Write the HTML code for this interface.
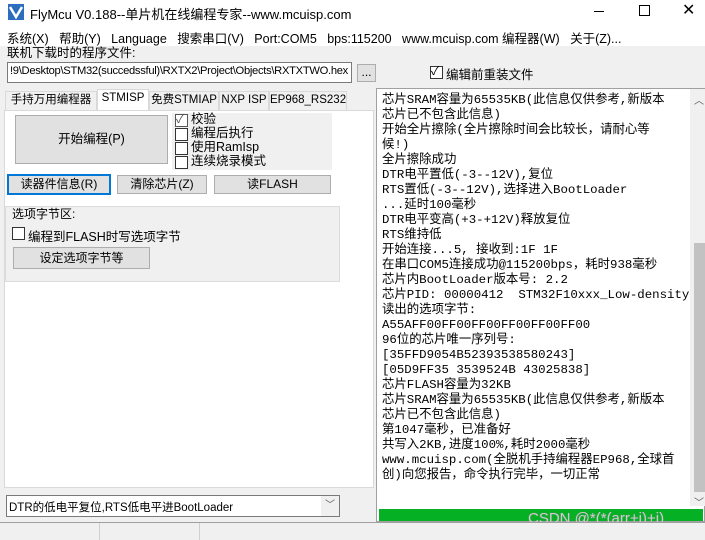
<!DOCTYPE html>
<html><head><meta charset="utf-8"><style>
*{box-sizing:border-box;margin:0;padding:0}
body{width:705px;height:540px;overflow:hidden;background:#f0f0f0;font-family:"Liberation Sans","Noto Sans CJK SC",sans-serif;font-size:12px;color:#000;position:relative}
.a{position:absolute;white-space:nowrap}
.btn{position:absolute;background:#e1e1e1;border:1px solid #adadad;text-align:center}
.cb{position:absolute;width:13px;height:13px;border:1px solid #333;background:#fff}
.log{font-family:"Liberation Mono","Noto Sans CJK SC",monospace;font-size:12.4px;line-height:15px}
.tab{position:absolute;height:20px;border:1px solid #d9d9d9;background:#f0f0f0;font-size:11.5px;line-height:17px;text-align:center;overflow:hidden}
</style></head><body>
<div class="a" style="left:0;top:0;width:705px;height:46px;background:#fff"></div>
<svg class="a" style="left:8px;top:4px" width="16" height="16"><rect width="16" height="16" fill="#2a6ebd"/><path d="M2 3 L8 13 L14 3" stroke="#fff" stroke-width="2.5" fill="none"/></svg>
<div class="a" style="left:30px;top:4px;font-size:13px">FlyMcu V0.188--单片机在线编程专家--www.mcuisp.com</div>
<div class="a" style="left:594px;top:11px;width:10px;height:1px;background:#000"></div>
<div class="a" style="left:639px;top:5px;width:11px;height:11px;border:1px solid #000"></div>
<div class="a" style="left:682px;top:0px;font-size:16px">✕</div>
<div class="a" style="left:7px;top:28px;font-size:12.5px">系统(X)&nbsp;&nbsp;&nbsp;帮助(Y)&nbsp;&nbsp;&nbsp;Language&nbsp;&nbsp;&nbsp;搜索串口(V)&nbsp;&nbsp;&nbsp;Port:COM5&nbsp;&nbsp;&nbsp;bps:115200&nbsp;&nbsp;&nbsp;www.mcuisp.com 编程器(W)&nbsp;&nbsp;&nbsp;关于(Z)...</div>
<div class="a" style="left:7px;top:45px;font-size:12.5px;line-height:16px">联机下载时的程序文件:</div>
<div class="a" style="left:7px;top:62px;width:345px;height:21px;background:#fff;border:1px solid #7a7a7a;overflow:hidden;padding:2px 0 0 2px;font-size:11.2px;letter-spacing:-0.3px">!9\Desktop\STM32(succedssful)\RXTX2\Project\Objects\RXTXTWO.hex</div>
<div class="btn" style="left:357px;top:64px;width:19px;height:18px;line-height:14px">...</div>
<div class="cb" style="left:430px;top:66px"></div><div class="a" style="left:431px;top:62px;font-size:12px">✓</div>
<div class="a" style="left:446px;top:64px;font-size:12.5px">编辑前重装文件</div>
<div class="tab" style="left:5px;top:91px;width:92px">手持万用编程器</div>
<div class="tab" style="left:97px;top:89px;width:52px;height:22px;background:#fff;border-bottom:none">STMISP</div>
<div class="tab" style="left:149px;top:91px;width:70px">免费STMIAP</div>
<div class="tab" style="left:219px;top:91px;width:50px">NXP ISP</div>
<div class="tab" style="left:269px;top:91px;width:78px">EP968_RS232</div>
<div class="a" style="left:4px;top:110px;width:370px;height:378px;background:#fff;border:1px solid #d9d9d9"></div>
<div class="btn" style="left:15px;top:115px;width:153px;height:49px;line-height:47px;font-size:12.5px">开始编程(P)</div>
<div class="a" style="left:172px;top:113px;width:160px;height:57px;background:#f0f0f0"></div>
<div class="cb" style="left:175px;top:114px;border-color:#555"></div><div class="a" style="left:176px;top:110px;color:#555">✓</div>
<div class="a" style="left:191px;top:112px;font-size:12.5px;line-height:14px">校验<br>编程后执行<br>使用RamIsp<br>连续烧录模式</div>
<div class="cb" style="left:175px;top:128px"></div><div class="cb" style="left:175px;top:142px"></div><div class="cb" style="left:175px;top:156px"></div>
<div class="btn" style="left:7px;top:174px;width:104px;height:21px;border:2px solid #0078d7;line-height:17px">读器件信息(R)</div>
<div class="btn" style="left:117px;top:175px;width:90px;height:19px;line-height:17px">清除芯片(Z)</div>
<div class="btn" style="left:214px;top:175px;width:117px;height:19px;line-height:17px">读FLASH</div>
<div class="a" style="left:5px;top:206px;width:335px;height:76px;background:#f0f0f0;border:1px solid #dcdcdc"></div>
<div class="a" style="left:12px;top:205px">选项字节区:</div>
<div class="cb" style="left:12px;top:227px"></div>
<div class="a" style="left:28px;top:226px;font-size:12.5px">编程到FLASH时写选项字节</div>
<div class="btn" style="left:13px;top:247px;width:137px;height:22px;line-height:20px">设定选项字节等</div>
<div class="a" style="left:6px;top:495px;width:334px;height:22px;background:#fff;border:1px solid #7a7a7a;padding:3px 2px;font-size:11.5px">DTR的低电平复位,RTS低电平进BootLoader</div>
<div class="a" style="left:321px;top:496px;width:18px;height:20px;background:#f0f0f0;font-size:10px;text-align:center;line-height:20px;color:#555">﹀</div>
<div class="a" style="left:376px;top:88px;width:329px;height:434px;border:1px solid #a0a0a0;background:#fff"></div>
<div class="a log" style="left:382px;top:93px">芯片SRAM容量为65535KB(此信息仅供参考,新版本<br>芯片已不包含此信息)<br>开始全片擦除(全片擦除时间会比较长，请耐心等<br>候!)<br>全片擦除成功<br>DTR电平置低(-3--12V),复位<br>RTS置低(-3--12V),选择进入BootLoader<br>...延时100毫秒<br>DTR电平变高(+3-+12V)释放复位<br>RTS维持低<br>开始连接...5, 接收到:1F 1F<br>在串口COM5连接成功@115200bps，耗时938毫秒<br>芯片内BootLoader版本号: 2.2<br>芯片PID: 00000412&nbsp;&nbsp;STM32F10xxx_Low-density<br>读出的选项字节:<br>A55AFF00FF00FF00FF00FF00FF00<br>96位的芯片唯一序列号:<br>[35FFD9054B52393538580243]<br>[05D9FF35 3539524B 43025838]<br>芯片FLASH容量为32KB<br>芯片SRAM容量为65535KB(此信息仅供参考,新版本<br>芯片已不包含此信息)<br>第1047毫秒，已准备好<br>共写入2KB,进度100%,耗时2000毫秒<br>www.mcuisp.com(全脱机手持编程器EP968,全球首<br>创)向您报告，命令执行完毕，一切正常</div>
<div class="a" style="left:690px;top:89px;width:15px;height:417px;background:#f0f0f0"></div>
<div class="a" style="left:694px;top:92px;font-size:10px;color:#555">︿</div>
<div class="a" style="left:694px;top:243px;width:11px;height:249px;background:#c2c2c2"></div>
<div class="a" style="left:694px;top:494px;font-size:10px;color:#555">﹀</div>
<div class="a" style="left:379px;top:509px;width:324px;height:12px;background:#06b025"></div>
<div class="a" style="left:528px;top:510px;font-size:15px;color:#ccc;text-shadow:0 0 1px #888">CSDN @*(*(arr+i)+j)</div>
<div class="a" style="left:0;top:522px;width:705px;height:18px;background:#f0f0f0;border-top:1px solid #a0a0a0"></div>
<div class="a" style="left:99px;top:523px;width:1px;height:17px;background:#d0d0d0"></div>
<div class="a" style="left:199px;top:523px;width:1px;height:17px;background:#d0d0d0"></div>
</body></html>
